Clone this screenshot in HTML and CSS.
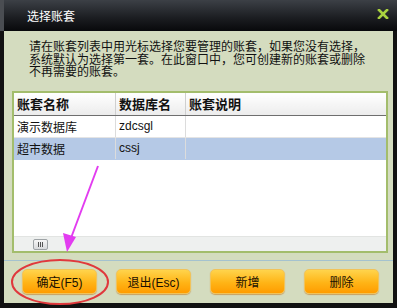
FILE: index.html
```html
<!DOCTYPE html>
<html lang="zh-CN">
<head>
  <meta charset="UTF-8">
  <title>选择账套</title>
  <link rel="stylesheet" href="styles.css">
</head>
<body>
  <div class="window">
    <div class="titlebar">
      <span class="title">选择账套</span>
      <svg class="close" width="12" height="10" viewBox="0 0 12 10">
        <path d="M2 1 L10 9 M10 1 L2 9" stroke="#a9d23f" stroke-width="2.6" stroke-linecap="square"/>
      </svg>
    </div>
    <div class="content">
      <p class="desc">请在账套列表中用光标选择您要管理的账套，如果您没有选择，<br>系统默认为选择第一套。在此窗口中，您可创建新的账套或删除<br>不再需要的账套。</p>
      <div class="panel">
        <table class="grid">
          <tr class="head">
            <th class="c1">账套名称</th>
            <th class="c2">数据库名</th>
            <th>账套说明</th>
          </tr>
          <tr>
            <td>演示数据库</td>
            <td>zdcsgl</td>
            <td></td>
          </tr>
          <tr class="selected">
            <td>超市数据</td>
            <td>cssj</td>
            <td></td>
          </tr>
        </table>
        <div class="scrollbar">
          <div class="thumb"><span></span><span></span><span></span></div>
        </div>
      </div>
      <div class="separator"></div>
      <div class="buttons">
        <button class="btn">确定(F5)</button>
        <button class="btn">退出(Esc)</button>
        <button class="btn">新增</button>
        <button class="btn">删除</button>
      </div>
    </div>
    <svg class="marks" width="397" height="308" viewBox="0 0 397 308">
      <line x1="98" y1="166" x2="71" y2="238" stroke="#e23cf0" stroke-width="2"/>
      <polygon points="67,252 63,233 76,237" fill="#e23cf0"/>
      <ellipse cx="60" cy="282" rx="48" ry="22" fill="none" stroke="#e0383c" stroke-width="2"/>
    </svg>
  </div>
</body>
</html>
```

FILE: styles.css
```css
body {
  margin: 0;
  font-family: "Liberation Sans", "Noto Sans CJK SC", sans-serif;
  font-size: 12px;
  color: #111;
}
.window {
  position: relative;
  width: 397px;
  height: 308px;
  background: #111;
  overflow: hidden;
}
.titlebar {
  height: 31px;
  display: flex;
  align-items: center;
  justify-content: space-between;
  padding: 0 8px 0 23px;
  background: linear-gradient(#3c4046, #1a1c20 60%, #08090b);
  border-left: 4px solid #4a4d52;
  box-sizing: border-box;
}
.title {
  color: #fff;
  font-size: 12px;
  margin-top: -1px;
}
.close {
  margin-top: -4px;
}
.content {
  margin: 0 4px;
  height: 272px;
  background: #d4dcbf;
  padding-top: 10px;
  box-sizing: border-box;
}
.desc {
  margin: 0 0 12px 25px;
  line-height: 12.5px;
  font-size: 12px;
}
.panel {
  margin: 0 5px 0 8px;
  height: 162px;
  border: 2px solid #a3bd6c;
  background: #fff;
  box-sizing: border-box;
  display: flex;
  flex-direction: column;
  justify-content: space-between;
}
.grid {
  border-collapse: collapse;
  width: 100%;
}
.grid th {
  height: 22px;
  text-align: left;
  font-size: 13px;
  font-weight: bold;
  padding: 0 0 0 3px;
  background: linear-gradient(#ffffff, #ececec);
  border-bottom: 1px solid #6e6e6e;
  border-right: 1px solid #cfcfcf;
}
.grid .c1 { width: 98px; }
.grid .c2 { width: 66px; }
.grid td {
  height: 21px;
  padding: 0 0 0 3px;
  border-right: 1px solid #dcdcdc;
  border-bottom: 1px solid #e4e4e4;
}
.grid th:last-child,
.grid td:last-child {
  border-right: none;
}
.selected td {
  background: #b5c9e6;
  border-bottom-color: #b5c9e6;
}
.scrollbar {
  height: 15px;
  background: #eef0ef;
  border-top: 1px solid #e2e4e2;
  padding: 2px 0 0 19px;
  box-sizing: border-box;
}
.thumb {
  width: 15px;
  height: 11px;
  border: 1px solid #9ea3a6;
  border-radius: 2px;
  background: linear-gradient(#f6f6f6, #d8dadc);
  box-sizing: border-box;
  display: flex;
  justify-content: center;
  align-items: center;
  gap: 1px;
}
.thumb span {
  width: 1px;
  height: 5px;
  background: #555;
}
.separator {
  height: 1px;
  margin-top: 7px;
  background: #a4c2cf;
}
.buttons {
  display: flex;
  gap: 19px;
  padding: 8px 0 0 18px;
}
.btn {
  width: 75px;
  height: 25px;
  padding: 0;
  border: 1px solid #f1c35a;
  border-radius: 5px;
  background: linear-gradient(#ffd44c, #ffb416 55%, #ff9c00);
  font-family: "Liberation Sans", "Noto Sans CJK SC", sans-serif;
  font-size: 12px;
  color: #1a1000;
  box-shadow: 0 1px 1px #c8a060;
}
.marks {
  position: absolute;
  left: 0;
  top: 0;
  pointer-events: none;
}
```
